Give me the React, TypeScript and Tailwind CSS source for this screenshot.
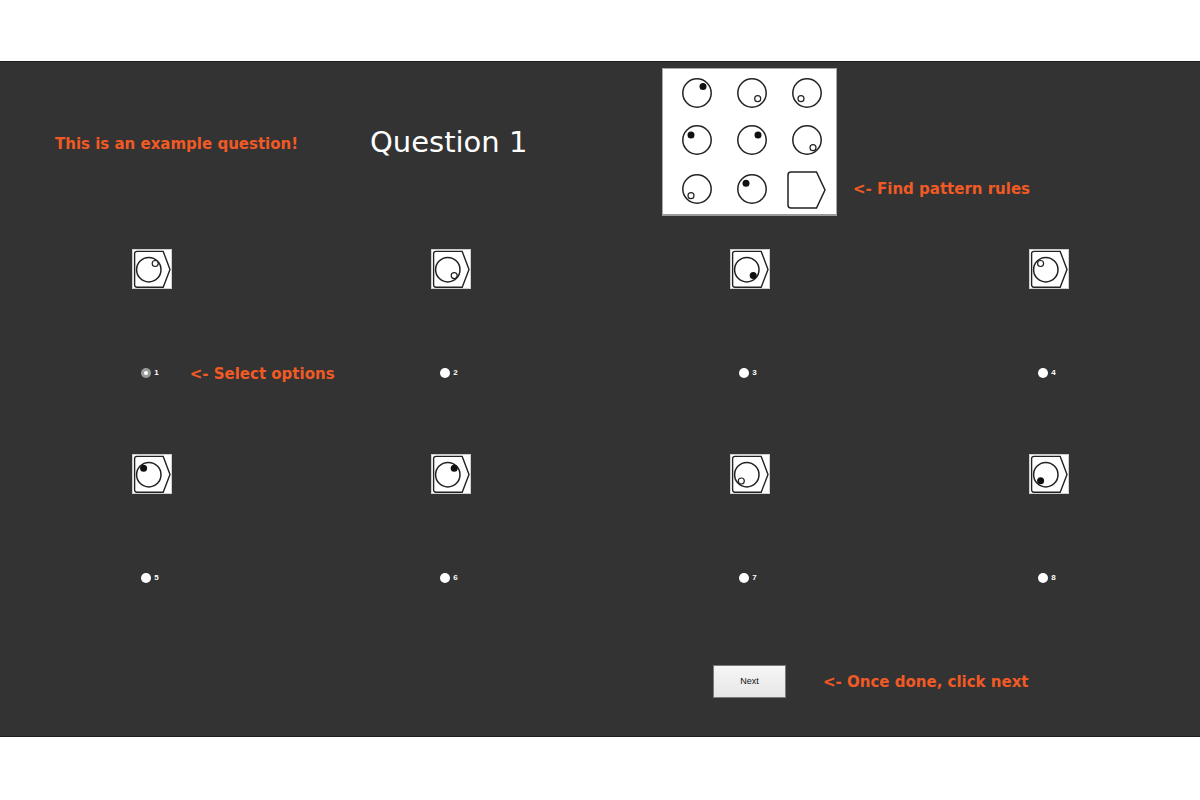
import React from 'react'

type Dot = { x: number; y: number; filled: boolean }

const ORANGE = 'text-[#f15a24]'

// option dots relative to the 40x40 tile
const options: Dot[] = [
  { x: 23.2, y: 14.5, filled: false },
  { x: 23.2, y: 26.6, filled: false },
  { x: 23.2, y: 26.6, filled: true },
  { x: 11.6, y: 14.5, filled: false },
  { x: 11.6, y: 14.3, filled: true },
  { x: 23.2, y: 14.3, filled: true },
  { x: 11.3, y: 27, filled: false },
  { x: 11.6, y: 26.8, filled: true },
]

// matrix cells: dot offset from circle centre
const cells: { dx: number; dy: number; filled: boolean }[] = [
  { dx: 6, dy: -6.5, filled: true },
  { dx: 5.7, dy: 5.7, filled: false },
  { dx: -6, dy: 5.7, filled: false },
  { dx: -6, dy: -5, filled: true },
  { dx: 6, dy: -5, filled: true },
  { dx: 6, dy: 7.7, filled: false },
  { dx: -6, dy: 6.7, filled: false },
  { dx: -6, dy: -5.7, filled: true },
]

function DotMark({ x, y, filled }: Dot) {
  return filled ? (
    <circle cx={x} cy={y} r={3.5} fill="#111" />
  ) : (
    <circle cx={x} cy={y} r={3} fill="white" stroke="#222" strokeWidth={1.2} />
  )
}

function OptionTile({ dot }: { dot: Dot }) {
  return (
    <svg width="40" height="40" viewBox="0 0 40 40" className="block">
      <rect x="0.5" y="0.5" width="39" height="39" fill="white" stroke="#cfcfcf" />
      <path
        d="M5 2.4 H31.2 L38 20.5 L31.2 38.2 H5 Q2.6 38.2 2.6 35.8 V4.8 Q2.6 2.4 5 2.4 Z"
        fill="none"
        stroke="#222"
        strokeWidth="1.4"
      />
      <circle cx="16.8" cy="20.7" r="12.2" fill="none" stroke="#222" strokeWidth="1.5" />
      <DotMark {...dot} />
    </svg>
  )
}

function Matrix() {
  const xs = [35, 90, 145]
  const ys = [25, 72, 121]
  return (
    <div className="mt-[6px] w-[175px] h-[148px] bg-white border border-[#a8a8a8] border-b-2 border-b-[#9a9a9a]">
      <svg width="173" height="145" viewBox="1 1 173 145" className="block">
        {cells.map((c, i) => {
          const cx = xs[i % 3]
          const cy = ys[Math.floor(i / 3)]
          return (
            <g key={i}>
              <circle cx={cx} cy={cy} r={14.2} fill="none" stroke="#222" strokeWidth="1.5" />
              <DotMark x={cx + c.dx} y={cy + c.dy} filled={c.filled} />
            </g>
          )
        })}
        <path
          d="M129 104 H154.5 L163 122 L154.5 140 H129 Q126 140 126 137 V107 Q126 104 129 104 Z"
          fill="none"
          stroke="#222"
          strokeWidth="1.5"
        />
      </svg>
    </div>
  )
}

function Radio({ n, checked }: { n: number; checked?: boolean }) {
  return (
    <div className="flex items-center gap-[3px] h-[10px] pr-[3px]">
      {checked ? (
        <span className="w-[10px] h-[10px] rounded-full bg-[#9b9b9b] flex items-center justify-center">
          <span className="w-[4px] h-[4px] rounded-full bg-white" />
        </span>
      ) : (
        <span className="w-[10px] h-[10px] rounded-full bg-white" />
      )}
      <span className="text-[8px] leading-[10px] font-bold text-white font-['Liberation_Sans',sans-serif]">
        {n}
      </span>
    </div>
  )
}

function OptionRow({ start }: { start: number }) {
  return (
    <div className="grid grid-cols-4 mx-[2px]">
      {options.slice(start, start + 4).map((dot, i) => {
        const n = start + i + 1
        return (
          <div key={n} className="flex flex-col items-center">
            <OptionTile dot={dot} />
            <div className="mt-[79px] relative">
              <Radio n={n} checked={n === 1} />
              {n === 1 && (
                <span
                  className={`absolute left-full top-[-3px] ml-[28px] whitespace-nowrap text-[15px] leading-[18px] font-bold ${ORANGE}`}
                >
                  &lt;- Select options
                </span>
              )}
            </div>
          </div>
        )
      })}
    </div>
  )
}

export default function App() {
  return (
    <div className="w-[1200px] h-[800px] bg-white pt-[61px] font-['DejaVu_Sans',sans-serif]">
      <div className="h-[676px] bg-[#333333] border-y border-[#1e1e1e]">
        {/* Header: note, title, pattern matrix */}
        <div className="flex items-start h-[154px]">
          <div className={`w-[370px] pl-[55px] pt-[73px] text-[15px] leading-[18px] font-bold ${ORANGE}`}>
            This is an example question!
          </div>
          <div className="w-[292px] pt-[63px] text-[29px] leading-[34px] text-white">Question 1</div>
          <Matrix />
          <div className={`ml-[16px] pt-[118px] text-[15px] leading-[18px] font-bold ${ORANGE}`}>
            &lt;- Find pattern rules
          </div>
        </div>

        {/* Answer options */}
        <div className="mt-[33px]">
          <OptionRow start={0} />
        </div>
        <div className="mt-[76px]">
          <OptionRow start={4} />
        </div>

        {/* Next */}
        <div className="grid grid-cols-4 mx-[2px] mt-[82px]">
          <div />
          <div />
          <div className="flex justify-center">
            <div className="relative">
              <button className="w-[73px] h-[33px] bg-gradient-to-b from-[#f6f6f6] to-[#e6e6e6] border border-[#7a7a7a] text-[9px] text-[#111] font-['Liberation_Sans',sans-serif]">
                Next
              </button>
              <span
                className={`absolute left-full top-[8px] ml-[37px] whitespace-nowrap text-[15px] leading-[18px] font-bold ${ORANGE}`}
              >
                &lt;- Once done, click next
              </span>
            </div>
          </div>
          <div />
        </div>
      </div>
    </div>
  )
}
